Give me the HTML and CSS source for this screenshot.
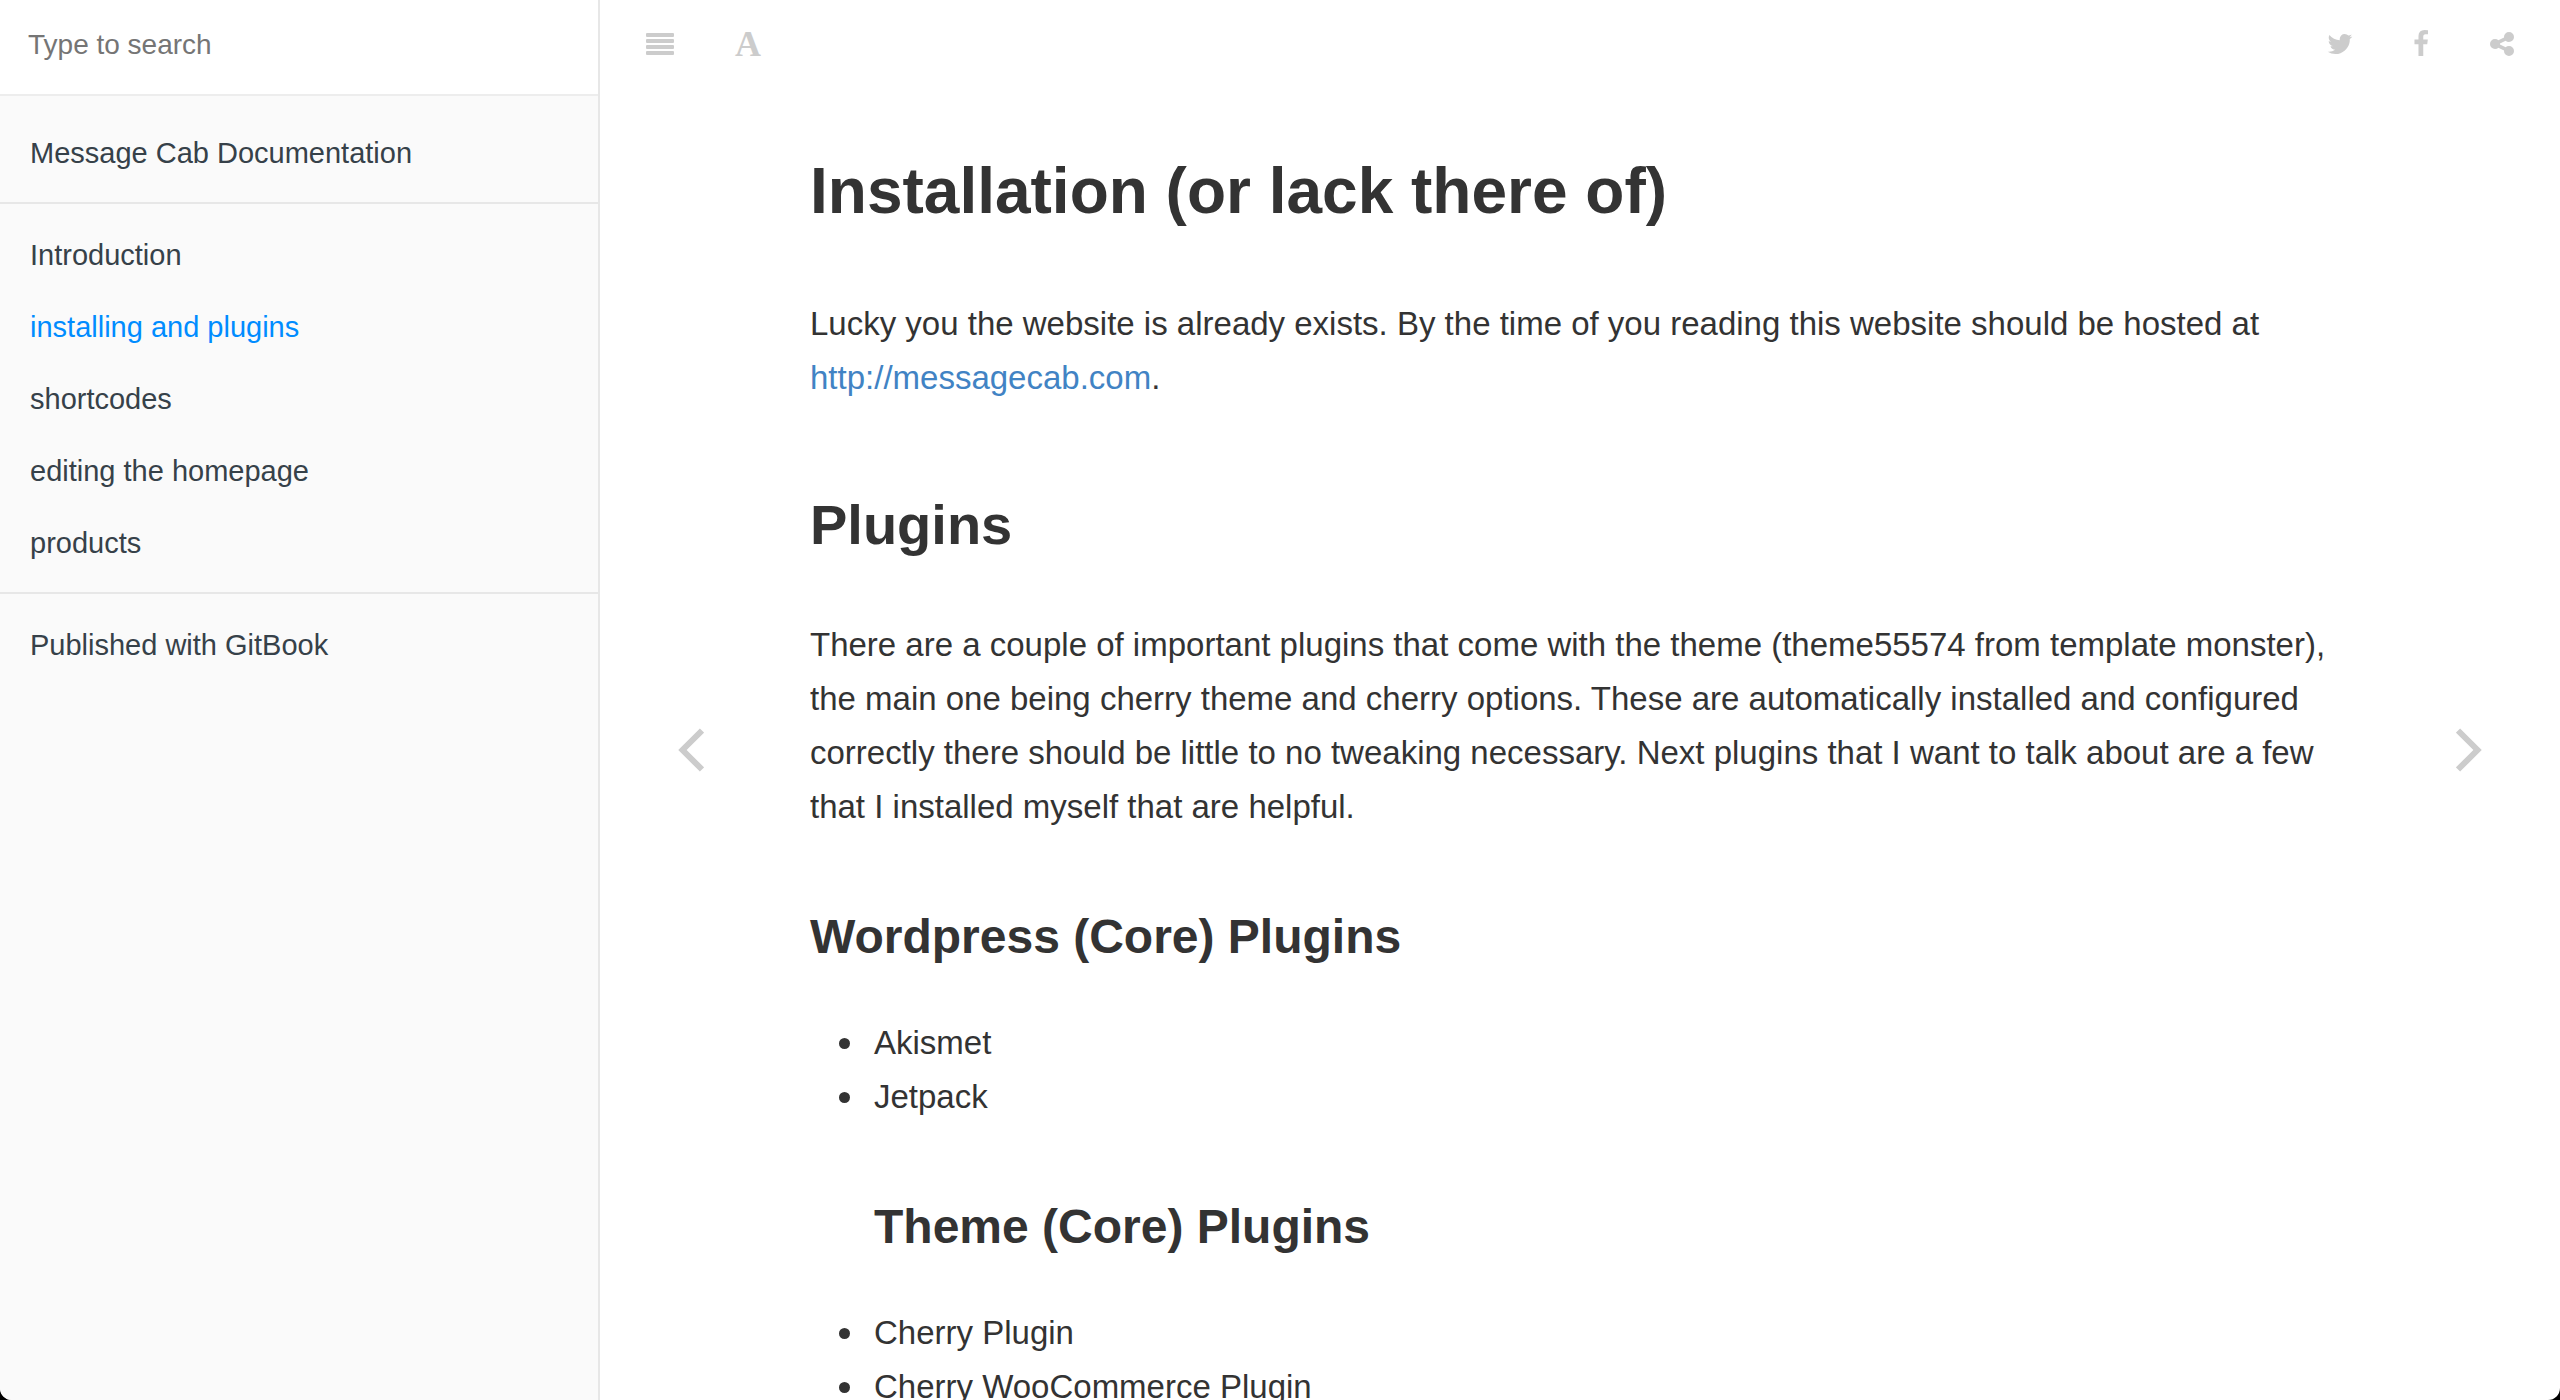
FILE: index.html
```html
<!DOCTYPE html>
<html lang="en">
<head>
<meta charset="utf-8">
<meta name="viewport" content="width=device-width, initial-scale=1">
<title>installing and plugins | Message Cab Documentation</title>
<link rel="stylesheet" href="styles.css">
</head>
<body>
<div class="book">
  <aside class="sidebar">
    <input class="search" type="text" placeholder="Type to search" aria-label="Type to search">
    <nav class="summary">
      <ul class="group">
        <li><a href="#">Message Cab Documentation</a></li>
      </ul>
      <ul class="group">
        <li><a href="#">Introduction</a></li>
        <li><a class="active" href="#">installing and plugins</a></li>
        <li><a href="#">shortcodes</a></li>
        <li><a href="#">editing the homepage</a></li>
        <li><a href="#">products</a></li>
      </ul>
      <ul class="group">
        <li><a href="#">Published with GitBook</a></li>
      </ul>
    </nav>
  </aside>
  <main class="body">
    <header class="toolbar">
      <button class="tool" type="button" aria-label="Toggle sidebar">
        <svg width="28" height="22" viewBox="0 0 28 22"><rect width="28" height="4" rx="1"/><rect y="6" width="28" height="4" rx="1"/><rect y="12" width="28" height="4" rx="1"/><rect y="18" width="28" height="4" rx="1"/></svg>
      </button>
      <button class="tool font-tool" type="button" aria-label="Font settings">A</button>
      <span class="spacer"></span>
      <button class="tool share" type="button" aria-label="Twitter">
        <svg width="26" height="28" viewBox="0 0 1664 1792"><path d="M1620 408q-67 98-162 167 1 14 1 42 0 130-38 259.500t-115.500 248.500-184.500 210.500-258 146-323 54.500q-271 0-496-145 35 4 78 4 225 0 401-138-105-2-188-64.500t-114-159.500q33 5 61 5 43 0 85-11-112-23-185.500-111.500t-73.500-205.500v-4q68 38 146 41-66-44-105-115t-39-154q0-88 44-163 121 149 294.500 238.500t371.500 99.500q-8-38-8-74 0-134 94.500-228.500t228.500-94.500q140 0 236 102 109-21 205-78-37 115-142 178 93-10 186-50z"/></svg>
      </button>
      <button class="tool share" type="button" aria-label="Facebook">
        <svg width="16" height="28" viewBox="0 0 1024 1792"><path d="M959 12v264h-157q-86 0-116 36t-30 108v189h293l-39 296h-254v759h-306v-759h-255v-296h255v-218q0-186 104-288.500t277-102.500q147 0 228 12z"/></svg>
      </button>
      <button class="tool share" type="button" aria-label="Share">
        <svg width="24" height="24" viewBox="0 128 1536 1536"><path d="M1216 1024q133 0 226.500 93.500t93.500 226.500-93.500 226.500-226.500 93.500-226.500-93.500-93.500-226.500q0-12 2-34l-360-180q-92 86-218 86-133 0-226.500-93.500t-93.500-226.500 93.500-226.500 226.500-93.500q126 0 218 86l360-180q-2-22-2-34 0-133 93.500-226.500t226.500-93.500 226.500 93.500 93.500 226.500-93.500 226.500-226.500 93.500q-126 0-218-86l-360 180q2 22 2 34t-2 34l360 180q92-86 218-86z"/></svg>
      </button>
    </header>
    <div class="reader">
      <a class="turn" href="#" aria-label="Previous page">
        <svg width="28" height="46" viewBox="0 0 28 46"><path d="M26 3.500 6.500 23 26 42.500"/></svg>
      </a>
      <article class="page">
        <h1>Installation (or lack there of)</h1>
        <p>Lucky you the website is already exists. By the time of you reading this website should be hosted at <a href="#">http://messagecab.com</a>.</p>
        <h2>Plugins</h2>
        <p>There are a couple of important plugins that come with the theme (theme55574 from template monster), the main one being cherry theme and cherry options. These are automatically installed and configured correctly there should be little to no tweaking necessary. Next plugins that I want to talk about are a few that I installed myself that are helpful.</p>
        <h3>Wordpress (Core) Plugins</h3>
        <ul>
          <li>Akismet</li>
          <li>Jetpack
            <h3>Theme (Core) Plugins</h3>
          </li>
          <li>Cherry Plugin</li>
          <li>Cherry WooCommerce Plugin</li>
        </ul>
      </article>
      <a class="turn" href="#" aria-label="Next page">
        <svg width="28" height="46" viewBox="0 0 28 46"><path d="M2 3.500 21.500 23 2 42.500"/></svg>
      </a>
    </div>
  </main>
</div>
</body>
</html>
```
FILE: styles.css
```css
* { box-sizing: border-box; }

html { background: #000; }

body {
  margin: 0;
  font-family: "Helvetica Neue", Helvetica, "Liberation Sans", Arial, sans-serif;
  color: #333;
}

.book {
  display: grid;
  grid-template-columns: 600px minmax(0, 1fr);
  height: 100vh;
  overflow: hidden;
  border-radius: 0 0 12px 12px;
  background: #fff;
}

/* Sidebar */
.sidebar {
  border-right: 2px solid #e7e7e7;
  background: #fafafa;
  font-size: 29px;
  line-height: 32px;
}

.search {
  display: block;
  width: 100%;
  height: 96px;
  padding: 0 28px 4px;
  border: 0;
  border-bottom: 2px solid #ededed;
  background: #fff;
  font: inherit;
  font-size: 28px;
  color: #333;
  outline: 0;
}

.search::placeholder { color: #757575; opacity: 1; }

.summary { padding-top: 6px; }

.group {
  margin: 0;
  padding: 14px 0;
  list-style: none;
}

.group + .group { border-top: 2px solid #e7e7e7; }

.group a {
  display: block;
  padding: 21px 30px 19px;
  color: #364149;
  text-decoration: none;
}

.group .active { color: #008cff; }

/* Toolbar */
.body {
  display: flex;
  flex-direction: column;
  min-height: 0;
}

.toolbar {
  display: flex;
  flex: none;
  height: 100px;
  padding: 0 18px 0 16px;
}

.spacer { flex: 1; }

.tool {
  display: flex;
  align-items: center;
  justify-content: center;
  width: 88px;
  height: 88px;
  padding: 0;
  border: 0;
  background: none;
  color: #ccc;
}

.tool svg { fill: currentColor; }

.share { width: 81px; }

.font-tool {
  font: bold 36px/40px "Liberation Serif", "Times New Roman", serif;
}

/* Reading area */
.reader {
  display: flex;
  flex: 1;
  min-height: 0;
}

.turn {
  display: flex;
  flex: none;
  align-items: center;
  justify-content: center;
  width: 180px;
  color: #ccc;
}

.turn path {
  fill: none;
  stroke: currentColor;
  stroke-width: 6;
}

.page {
  flex: 1;
  max-width: 1600px;
  margin: 0 auto;
  padding: 37px 30px 80px;
  overflow-y: auto;
  scrollbar-width: none;
  font-size: 33px;
  line-height: 54px;
}

.page h1, .page h2, .page h3 { font-weight: bold; }

.page h1 { margin: 0 0 51px; font-size: 64px; line-height: 109px; }
.page h2 { margin: 72px 0 46px; font-size: 56px; line-height: 95px; }
.page h3 { margin: 62px 0 38px; font-size: 48px; line-height: 82px; }
.page p { margin: 0 0 27px; }
.page a { color: #4183c4; text-decoration: none; }

.page ul {
  margin: 0;
  padding-left: 64px;
  list-style: none;
}

.page li::before {
  content: "";
  display: inline-block;
  width: 11px;
  height: 11px;
  margin: 0 24px 0 -35px;
  border-radius: 50%;
  background: currentColor;
  vertical-align: 5px;
}
```
